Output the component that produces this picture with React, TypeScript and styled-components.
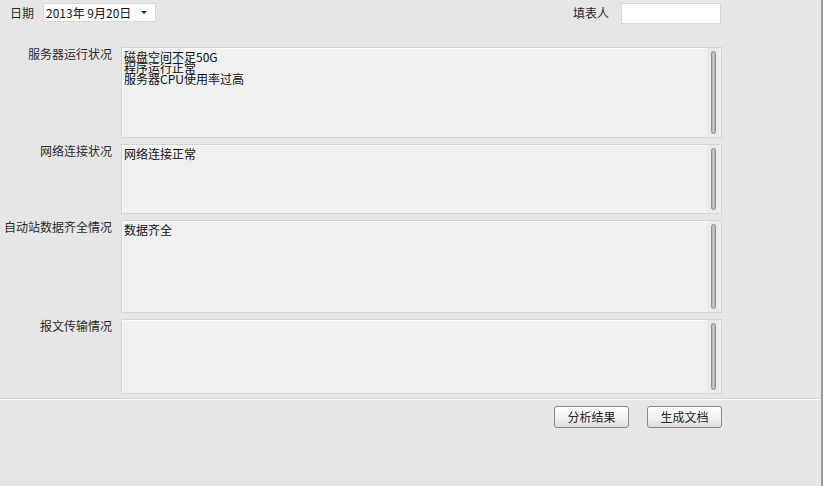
import styled, { createGlobalStyle } from "styled-components";

const GlobalStyle = createGlobalStyle`
  html, body {
    margin: 0;
    padding: 0;
    background: #e6e6e6;
  }
  body {
    font-family: "Noto Sans CJK SC", "DejaVu Sans", sans-serif;
    font-size: 12px;
    color: #333;
  }
`;

const StWindow = styled.div`
  width: 821px;
  height: 486px;
  border-right: 2px solid #9a9a9a;
  background: #e6e6e6;
  display: flex;
  flex-direction: column;
`;

const StTopBar = styled.div`
  display: flex;
  align-items: center;
  height: 26px;
  padding: 0 100px 0 10px;
`;

const StLabel = styled.span`
  line-height: 20px;
  color: #2a2a2a;
`;

const StCombo = styled.div`
  margin-left: 9px;
  width: 113px;
  height: 19px;
  margin-top: -2px;
  background: #fff;
  border: 1px solid #d8d8d8;
  display: flex;
  align-items: center;
  justify-content: space-between;
  padding: 0 8px 0 2px;
  box-sizing: border-box;
  font-size: 12px;
  color: #111;
`;

const StArrow = styled.span`
  width: 0;
  height: 0;
  border-left: 3px solid transparent;
  border-right: 3px solid transparent;
  border-top: 3px solid #222;
`;

const StSpacer = styled.div`
  flex: 1;
`;

const StInput = styled.div`
  margin-left: 12px;
  width: 100px;
  height: 21px;
  box-sizing: border-box;
  background: #fff;
  border: 1px solid #d6d6d6;
`;

const StForm = styled.div`
  display: grid;
  grid-template-columns: 121px 601px;
  row-gap: 6px;
  margin-top: 21px;
`;

const StRowLabel = styled.div`
  text-align: right;
  padding: 0 9px 0 0;
  line-height: 14px;
  white-space: nowrap;
  color: #2a2a2a;
`;

const StBox = styled.div<{ $h: number }>`
  height: ${({ $h }) => $h}px;
  box-sizing: border-box;
  background: #f0f0f0;
  border: 1px solid #d4d4d4;
  box-shadow: inset 1px 1px 0 #fafafa;
  display: flex;
`;

const StText = styled.div<{ $tight?: boolean }>`
  flex: 1;
  padding: ${({ $tight }) => ($tight ? "3px 2px" : "1px 2px")};
  line-height: ${({ $tight }) => ($tight ? "11px" : "16px")};
  font-size: 12px;
  color: #111;
  white-space: pre;
`;

const StScroll = styled.div`
  width: 12px;
  margin-right: 2px;
  padding: 3px 0;
  display: flex;
  justify-content: center;
  background: #eaeaea;
`;

const StThumb = styled.div`
  width: 5px;
  box-sizing: border-box;
  border: 1px solid #8f8f8f;
  border-radius: 3px;
  background: linear-gradient(to right, #b4b4b4, #c8c8c8, #b0b0b0);
`;

const StSeparator = styled.div`
  margin-top: 4px;
  height: 1px;
  background: #c9d5de;
  border-bottom: 1px solid #f8fbfd;
`;

const StButtons = styled.div`
  display: flex;
  justify-content: flex-end;
  gap: 18px;
  padding: 6px 99px 0 0;
`;

const StButton = styled.button`
  width: 75px;
  height: 22px;
  box-sizing: border-box;
  border: 1px solid #8a8a8a;
  border-radius: 3px;
  background: linear-gradient(to bottom, #ffffff, #f2f2f2 50%, #dedede);
  font-family: "Noto Sans CJK SC", sans-serif;
  font-size: 12px;
  color: #222;
  padding: 0;
  line-height: 20px;
`;

const rows = [
  { label: "服务器运行状况", h: 91, text: "磁盘空间不足50G\n程序运行正常\n服务器CPU使用率过高", tight: true },
  { label: "网络连接状况", h: 70, text: "网络连接正常" },
  { label: "自动站数据齐全情况", h: 93, text: "数据齐全" },
  { label: "报文传输情况", h: 75, text: "" },
];

const App = () => {
  return (
    <StWindow>
      <GlobalStyle />
      <StTopBar>
        <StLabel>日期</StLabel>
        <StCombo>
          <span>2013年 9月20日</span>
          <StArrow />
        </StCombo>
        <StSpacer />
        <StLabel>填表人</StLabel>
        <StInput />
      </StTopBar>
      <StForm>
        {rows.map((row) => [
          <StRowLabel key={row.label + "-label"}>{row.label}</StRowLabel>,
          <StBox key={row.label + "-box"} $h={row.h}>
            <StText $tight={row.tight}>{row.text}</StText>
            <StScroll>
              <StThumb />
            </StScroll>
          </StBox>,
        ])}
      </StForm>
      <StSeparator />
      <StButtons>
        <StButton>分析结果</StButton>
        <StButton>生成文档</StButton>
      </StButtons>
    </StWindow>
  );
};

export default App;
